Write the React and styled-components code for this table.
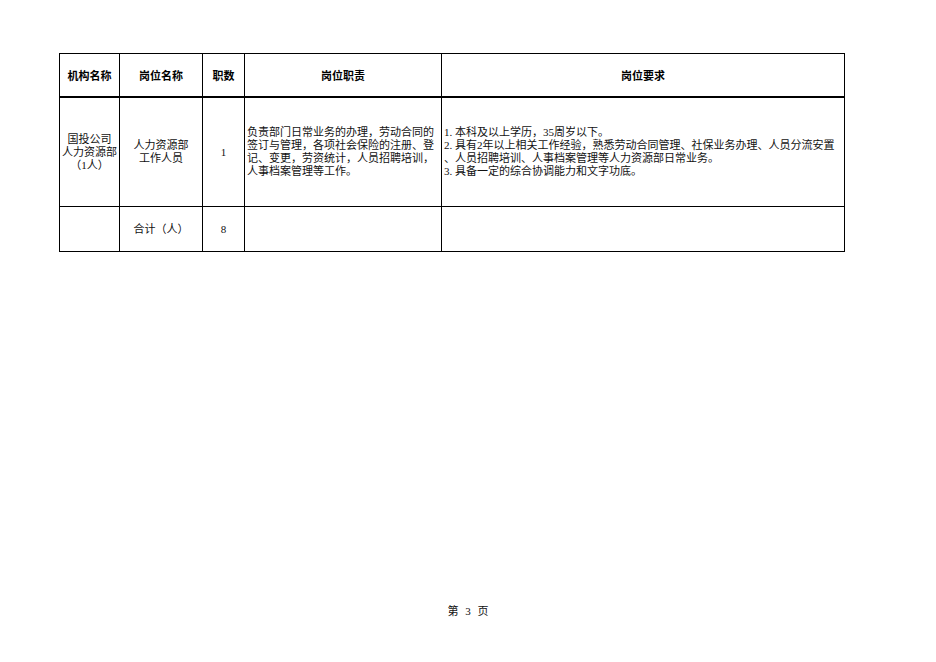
import React from "react";
import styled, { createGlobalStyle } from "styled-components";

const Global = createGlobalStyle`
  html, body { margin: 0; padding: 0; background: #fff; }
  body { font-family: "Liberation Serif", "Noto Sans CJK SC", serif; color: #000; }
`;

const Page = styled.div`
  width: 936px;
  height: 662px;
  display: flex;
  flex-direction: column;
  padding-top: 53px;
  box-sizing: border-box;
`;

const Sheet = styled.table`
  border-collapse: collapse;
  table-layout: fixed;
  width: 785px;
  margin-left: 59px;
`;

const Col = styled.col`
  width: ${(p) => p.$w}px;
`;

const HeadCell = styled.th`
  border: 1px solid #000;
  border-bottom: 2px solid #000;
  height: 42px;
  padding: 0;
  font-family: "Noto Sans CJK SC", sans-serif;
  font-weight: 700;
  font-size: 11px;
  text-align: center;
  vertical-align: middle;
`;

const Cell = styled.td`
  border: 1px solid #000;
  height: ${(p) => p.$h}px;
  padding: 0 ${(p) => (p.$left ? "2px" : "0")};
  font-size: 11px;
  line-height: 13px;
  text-align: ${(p) => (p.$left ? "left" : "center")};
  vertical-align: middle;
  color: #111;
`;

const Line = styled.div`
  white-space: nowrap;
`;

const Footer = styled.div`
  margin-top: auto;
  margin-bottom: 44px;
  text-align: center;
  font-size: 11px;
  word-spacing: 4px;
  color: #111;
`;

export default function App() {
  return (
    <>
      <Global />
      <Page>
        <Sheet>
          <colgroup>
            <Col $w={60} />
            <Col $w={83} />
            <Col $w={42} />
            <Col $w={197} />
            <Col $w={403} />
          </colgroup>
          <thead>
            <tr>
              <HeadCell>机构名称</HeadCell>
              <HeadCell>岗位名称</HeadCell>
              <HeadCell>职数</HeadCell>
              <HeadCell>岗位职责</HeadCell>
              <HeadCell>岗位要求</HeadCell>
            </tr>
          </thead>
          <tbody>
            <tr>
              <Cell $h={108}>
                <Line>国投公司</Line>
                <Line>人力资源部</Line>
                <Line>（1人）</Line>
              </Cell>
              <Cell $h={108}>
                <Line>人力资源部</Line>
                <Line>工作人员</Line>
              </Cell>
              <Cell $h={108}>1</Cell>
              <Cell $h={108} $left>
                <Line>负责部门日常业务的办理，劳动合同的</Line>
                <Line>签订与管理，各项社会保险的注册、登</Line>
                <Line>记、变更，劳资统计，人员招聘培训，</Line>
                <Line>人事档案管理等工作。</Line>
              </Cell>
              <Cell $h={108} $left>
                <Line>1. 本科及以上学历，35周岁以下。</Line>
                <Line>2. 具有2年以上相关工作经验，熟悉劳动合同管理、社保业务办理、人员分流安置</Line>
                <Line>、人员招聘培训、人事档案管理等人力资源部日常业务。</Line>
                <Line>3. 具备一定的综合协调能力和文字功底。</Line>
              </Cell>
            </tr>
            <tr>
              <Cell $h={44}></Cell>
              <Cell $h={44}>合计（人）</Cell>
              <Cell $h={44}>8</Cell>
              <Cell $h={44}></Cell>
              <Cell $h={44}></Cell>
            </tr>
          </tbody>
        </Sheet>
        <Footer>第 3 页</Footer>
      </Page>
    </>
  );
}
